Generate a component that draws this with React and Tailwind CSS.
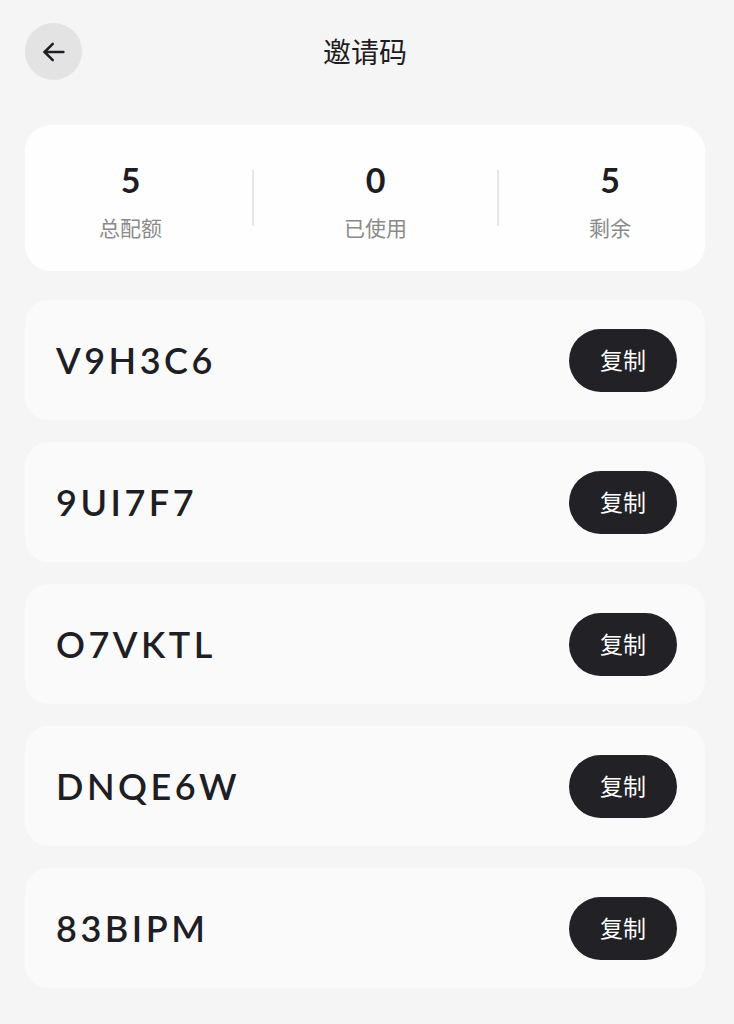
import React from "react";

const codes = ["V9H3C6", "9UI7F7", "O7VKTL", "DNQE6W", "83BIPM"];

function Stat({ value, label }) {
  return (
    <div className="flex-auto flex flex-col items-center">
      <div className="text-[34px] leading-[40px] font-bold text-[#1e1e22]">{value}</div>
      <div className="mt-[15px] text-[21px] leading-[26px] text-[#8a8a8a]">{label}</div>
    </div>
  );
}

export default function App() {
  return (
    <div
      className="min-h-[1024px] bg-[#f5f5f5] pl-[25px] pr-[29px] pt-[23px] pb-[30px]"
      style={{ fontFamily: '"Lato", "Noto Sans CJK SC", sans-serif' }}
    >
      <div className="grid grid-cols-[57px_1fr_57px] items-center">
        <button className="w-[57px] h-[57px] rounded-full bg-[#e3e3e3] flex items-center justify-center">
          <svg width="30" height="30" viewBox="0 0 24 24" fill="none" stroke="#1e1e22" strokeWidth="2" strokeLinecap="round" strokeLinejoin="round">
            <path d="M19.5 12H4.5" />
            <path d="M11 5.5L4.5 12L11 18.5" />
          </svg>
        </button>
        <div className="text-center text-[28px] font-normal text-[#1e1e22]">邀请码</div>
        <div />
      </div>

      <div className="mt-[45px] h-[146px] rounded-[26px] bg-[#fefefe] flex items-start pt-[35px]">
        <Stat value="5" label="总配额" />
        <div className="w-[2px] h-[56px] bg-[#e6e6e6] mx-[16px] mt-[10px]" />
        <Stat value="0" label="已使用" />
        <div className="w-[2px] h-[56px] bg-[#e6e6e6] mx-[16px] mt-[10px]" />
        <Stat value="5" label="剩余" />
      </div>

      <div className="mt-[29px] flex flex-col gap-[22px]">
        {codes.map((c) => (
          <div key={c} className="h-[120px] rounded-[24px] bg-[#fafafa] flex items-center justify-between pl-[31px] pr-[28px]">
            <div className="text-[36px] font-semibold tracking-[3.5px] text-[#1e1e24]">{c}</div>
            <button className="w-[108px] h-[63px] rounded-full bg-[#222126] text-white text-[23px] flex items-center justify-center">
              复制
            </button>
          </div>
        ))}
      </div>
    </div>
  );
}
